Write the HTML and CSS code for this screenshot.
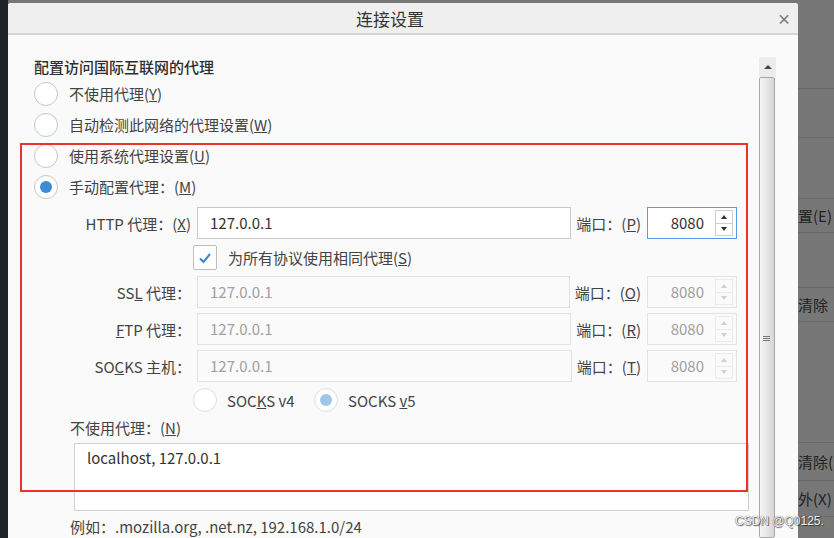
FILE: index.html
```html
<!DOCTYPE html>
<html lang="zh-CN">
<head>
    <meta charset="UTF-8">
    <title>连接设置</title>
    <link rel="stylesheet" href="styles.css">
</head>
<body>
    <div class="screen">
        <div class="edge"></div>
        <div class="dialog">
            <div class="titlebar">
                <span class="title">连接设置</span>
                <span class="close">×</span>
            </div>
            <div class="dialog-body">
                <div class="pane">
                    <h2>配置访问国际互联网的代理</h2>
                    <div class="radio-row"><span class="radio"></span><span>不使用代理(<u>Y</u>)</span></div>
                    <div class="radio-row"><span class="radio"></span><span>自动检测此网络的代理设置(<u>W</u>)</span></div>
                    <div class="radio-row"><span class="radio"></span><span>使用系统代理设置(<u>U</u>)</span></div>
                    <div class="radio-row"><span class="radio checked"></span><span>手动配置代理：(<u>M</u>)</span></div>

                    <div class="field-row first">
                        <span class="field-label">HTTP 代理：(<u>X</u>)</span>
                        <input class="text-input" type="text" value="127.0.0.1">
                        <span class="port-label">端口：(<u>P</u>)</span>
                        <div class="spin focused">
                            <span class="spin-value">8080</span>
                            <div class="spin-arrows"><span class="up"></span><span class="down"></span></div>
                        </div>
                    </div>
                    <div class="check-row">
                        <span class="checkbox">
                            <svg width="16" height="16" viewBox="0 0 16 16"><polyline points="3,8.5 6.5,12 13,4" fill="none" stroke="#3a86d0" stroke-width="2"/></svg>
                        </span>
                        <span>为所有协议使用相同代理(<u>S</u>)</span>
                    </div>
                    <div class="field-row">
                        <span class="field-label">SS<u>L</u> 代理：</span>
                        <input class="text-input" type="text" value="127.0.0.1" disabled>
                        <span class="port-label">端口：(<u>O</u>)</span>
                        <div class="spin disabled">
                            <span class="spin-value">8080</span>
                            <div class="spin-arrows"><span class="up"></span><span class="down"></span></div>
                        </div>
                    </div>
                    <div class="field-row">
                        <span class="field-label"><u>F</u>TP 代理：</span>
                        <input class="text-input" type="text" value="127.0.0.1" disabled>
                        <span class="port-label">端口：(<u>R</u>)</span>
                        <div class="spin disabled">
                            <span class="spin-value">8080</span>
                            <div class="spin-arrows"><span class="up"></span><span class="down"></span></div>
                        </div>
                    </div>
                    <div class="field-row">
                        <span class="field-label">SO<u>C</u>KS 主机：</span>
                        <input class="text-input" type="text" value="127.0.0.1" disabled>
                        <span class="port-label">端口：(<u>T</u>)</span>
                        <div class="spin disabled">
                            <span class="spin-value">8080</span>
                            <div class="spin-arrows"><span class="up"></span><span class="down"></span></div>
                        </div>
                    </div>
                    <div class="socks-row">
                        <div class="socks-option"><span class="radio disabled"></span><span>SOC<u>K</u>S v4</span></div>
                        <div class="socks-option"><span class="radio disabled checked"></span><span>SOCKS <u>v</u>5</span></div>
                    </div>

                    <div class="noproxy-label">不使用代理：(<u>N</u>)</div>
                    <div class="noproxy-box">localhost, 127.0.0.1</div>
                    <div class="hint">例如：.mozilla.org, .net.nz, 192.168.1.0/24</div>
                </div>
                <div class="scrollbar">
                    <div class="scroll-up"><span class="tri"></span></div>
                    <div class="scroll-thumb"><span class="grip"></span></div>
                </div>
            </div>
        </div>
        <div class="backdrop">
            <div class="bd-row" style="height: 89px"></div>
            <div class="bd-row" style="height: 49px"></div>
            <div class="bd-row" style="height: 61px"></div>
            <div class="bd-row" style="height: 34px">置(E)</div>
            <div class="bd-row" style="height: 55px"></div>
            <div class="bd-row" style="height: 34px">清除</div>
            <div class="bd-row" style="height: 121px"></div>
            <div class="bd-row" style="height: 38px">清除(</div>
            <div class="bd-row" style="height: 36px">外(X)</div>
        </div>
    </div>
    <div class="highlight"></div>
    <div class="watermark">CSDN @Q0125.</div>
</body>
</html>
```

FILE: styles.css
```css
body {
    margin: 0;
    font-family: "Noto Sans CJK SC", "Open Sans", sans-serif;
    font-size: 15px;
    color: #444;
    background-color: #777;
    overflow: hidden;
    position: relative;
    width: 834px;
    height: 538px;
}
.screen {
    display: flex;
    height: 538px;
}
.edge {
    width: 8px;
    background-color: #1f2428;
}
.dialog {
    width: 790px;
    margin-top: 3px;
    background-color: #fafafa;
    border-radius: 3px 3px 0 0;
    display: flex;
    flex-direction: column;
    overflow: hidden;
}
.titlebar {
    height: 30px;
    background-color: #efefef;
    border-bottom: 2px solid #d6d6d6;
    display: flex;
    align-items: center;
    justify-content: center;
    padding-right: 26px;
    position: relative;
}
.title {
    font-size: 17px;
    color: #333;
}
.close {
    position: absolute;
    right: 7px;
    top: 5px;
    font-size: 14px;
    font-weight: bold;
    color: #7a7a7a;
}
.dialog-body {
    flex: 1;
    display: flex;
    min-height: 0;
}
.pane {
    width: 751px;
    box-sizing: border-box;
    padding: 22px 10px 0 26px;
}
h2 {
    margin: 0 0 1px 0;
    font-size: 15px;
    line-height: 20px;
    font-weight: 500;
    color: #2e2e2e;
}
.radio-row {
    height: 31px;
    display: flex;
    align-items: center;
    gap: 11px;
    line-height: 20px;
}
.radio {
    width: 24px;
    height: 24px;
    box-sizing: border-box;
    border: 1px solid #c6c6c6;
    border-radius: 50%;
    background-color: #fff;
    display: flex;
    align-items: center;
    justify-content: center;
    flex-shrink: 0;
}
.radio.checked::after {
    content: "";
    width: 12px;
    height: 12px;
    border-radius: 50%;
    background-color: #3b8bd6;
}
.radio.disabled {
    border-color: #dedede;
}
.radio.disabled.checked::after {
    background-color: #9dc6e9;
}
.field-row {
    height: 32px;
    display: flex;
    align-items: center;
    margin-right: 12px;
    margin-bottom: 5px;
}
.field-row.first {
    margin-top: 5px;
    margin-bottom: 0;
}
.field-label {
    width: 157px;
    margin-right: 6px;
    text-align: right;
    white-space: nowrap;
}
.text-input {
    flex: 1;
    min-width: 0;
    height: 32px;
    box-sizing: border-box;
    border: 1px solid #c9c9c9;
    background-color: #fff;
    padding: 0 12px 2px;
    font-family: inherit;
    font-size: 15px;
    color: #333;
    outline: none;
}
.text-input:disabled {
    background-color: #fafafa;
    border-color: #e2e2e2;
    color: #a0a0a0;
}
.port-label {
    margin-left: 5px;
    margin-right: 6px;
    white-space: nowrap;
}
.spin {
    width: 90px;
    height: 32px;
    box-sizing: border-box;
    border: 1px solid #c9c9c9;
    background-color: #fff;
    display: flex;
    align-items: center;
    justify-content: flex-end;
    padding-right: 3px;
    color: #333;
}
.spin.focused {
    border-color: #5a9ce4;
}
.spin.disabled {
    background-color: #fafafa;
    border-color: #e2e2e2;
    color: #a0a0a0;
}
.spin-value {
    margin-right: 11px;
    margin-bottom: 2px;
}
.spin-arrows {
    width: 18px;
    height: 26px;
    display: flex;
    flex-direction: column;
}
.spin-arrows span {
    flex: 1;
    border: 1px solid #cfcfcf;
    display: flex;
    align-items: center;
    justify-content: center;
}
.spin-arrows span + span {
    border-top: none;
}
.spin-arrows .up::after,
.spin-arrows .down::after {
    content: "";
    border-left: 3px solid transparent;
    border-right: 3px solid transparent;
}
.spin-arrows .up::after {
    border-bottom: 4px solid #333;
}
.spin-arrows .down::after {
    border-top: 4px solid #333;
}
.spin.disabled .spin-arrows span {
    border-color: #ececec;
}
.spin.disabled .spin-arrows .up::after {
    border-bottom-color: #d0d0d0;
}
.spin.disabled .spin-arrows .down::after {
    border-top-color: #d0d0d0;
}
.check-row {
    height: 37px;
    display: flex;
    align-items: center;
    padding-left: 159px;
    gap: 11px;
}
.checkbox {
    width: 24px;
    height: 25px;
    box-sizing: border-box;
    border: 1px solid #bdbdbd;
    border-radius: 2px;
    background-color: #fff;
    display: flex;
    align-items: center;
    justify-content: center;
}
.socks-row {
    height: 36px;
    margin-top: -5px;
    display: flex;
    align-items: center;
    padding-left: 159px;
}
.socks-option {
    width: 121px;
    display: flex;
    align-items: center;
    gap: 10px;
}
.noproxy-label {
    line-height: 20px;
    padding-left: 36px;
}
.noproxy-box {
    margin: 5px 0 0 40px;
    height: 68px;
    box-sizing: border-box;
    border: 1px solid #d0d0d0;
    background-color: #fff;
    padding: 4px 12px;
    line-height: 20px;
    color: #333;
}
.hint {
    margin-top: 6px;
    padding-left: 36px;
    line-height: 20px;
}
.scrollbar {
    width: 17px;
    margin-top: 22px;
    display: flex;
    flex-direction: column;
}
.scroll-up {
    height: 20px;
    background-color: #ececec;
    display: flex;
    align-items: center;
    justify-content: center;
}
.tri {
    border-left: 4px solid transparent;
    border-right: 4px solid transparent;
    border-bottom: 4px solid #444;
}
.scroll-thumb {
    flex: 1;
    width: 16px;
    box-sizing: border-box;
    border: 1px solid #a8a8a8;
    border-radius: 2px;
    background: linear-gradient(to right, #f6f6f6, #d6d6d6);
    padding-top: 258px;
}
.grip {
    display: block;
    width: 7px;
    height: 5px;
    margin-left: 3px;
    background: repeating-linear-gradient(to bottom, #777 0, #777 1px, transparent 1px, transparent 2px);
}
.backdrop {
    width: 36px;
    display: flex;
    flex-direction: column;
}
.bd-row {
    box-sizing: border-box;
    border-bottom: 1px solid #6a6a6a;
    display: flex;
    align-items: center;
    color: #222;
    white-space: nowrap;
    overflow: hidden;
}
.highlight {
    position: absolute;
    left: 20px;
    top: 143px;
    width: 728px;
    height: 349px;
    box-sizing: border-box;
    border: 2px solid #e8352c;
}
.watermark {
    position: absolute;
    left: 735px;
    top: 514px;
    font-family: "Liberation Sans", sans-serif;
    font-size: 12px;
    color: #f4f4f4;
    text-shadow: 1px 1px 1px rgba(0, 0, 0, 0.6), 0 0 1px #444;
}
```
